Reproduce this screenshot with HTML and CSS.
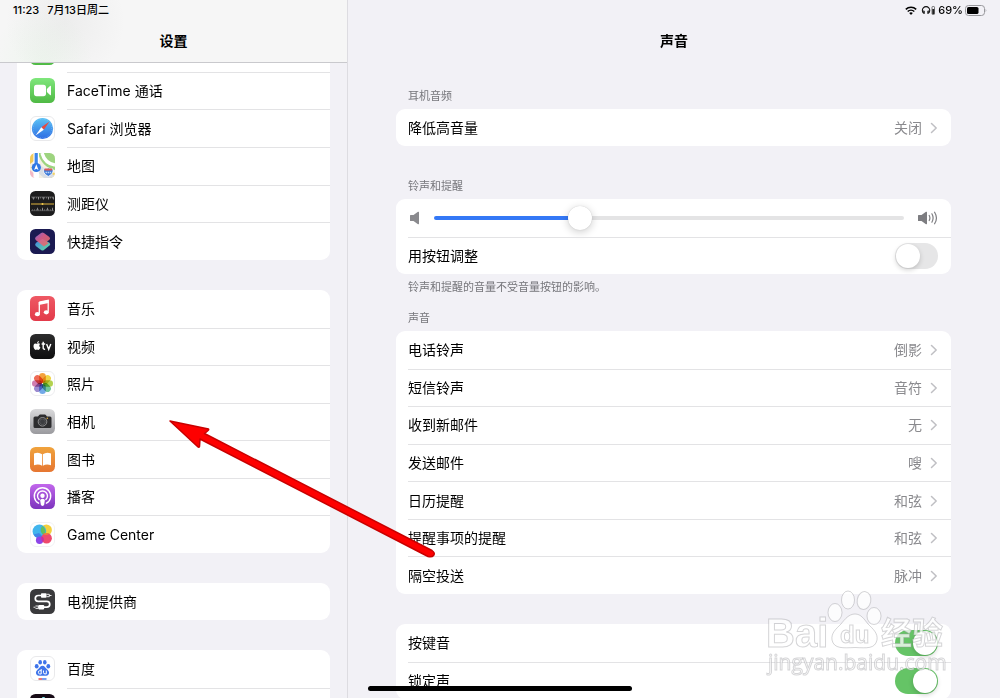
FILE: index.html
```html
<!DOCTYPE html>
<html lang="zh-CN">
<head>
  <meta charset="UTF-8">
  <meta name="viewport" content="width=device-width, initial-scale=1">
  <title>设置</title>
  <link rel="stylesheet" href="styles.css">
</head>
<body>

  <!-- shared shapes -->
  <svg class="defs" aria-hidden="true">
    <defs>
      <linearGradient id="gGreen" x1="0" y1="0" x2="0" y2="1"><stop offset="0" stop-color="#7fe77c"/><stop offset="1" stop-color="#4fb944"/></linearGradient>
      <linearGradient id="gBlue" x1="0" y1="0" x2="0" y2="1"><stop offset="0" stop-color="#5ac3f5"/><stop offset="1" stop-color="#2d6be3"/></linearGradient>
      <linearGradient id="gRed" x1="0" y1="0" x2="0" y2="1"><stop offset="0" stop-color="#ef5964"/><stop offset="1" stop-color="#e23a4a"/></linearGradient>
      <linearGradient id="gGray" x1="0" y1="0" x2="0" y2="1"><stop offset="0" stop-color="#d9d9db"/><stop offset="1" stop-color="#9a9a9e"/></linearGradient>
      <linearGradient id="gOrange" x1="0" y1="0" x2="0" y2="1"><stop offset="0" stop-color="#f0a33c"/><stop offset="1" stop-color="#e67632"/></linearGradient>
      <linearGradient id="gPurple" x1="0" y1="0" x2="0" y2="1"><stop offset="0" stop-color="#c267ec"/><stop offset="1" stop-color="#7c33bd"/></linearGradient>
      <linearGradient id="gDark" x1="0" y1="0" x2="0" y2="1"><stop offset="0" stop-color="#2c2c2d"/><stop offset="1" stop-color="#0e0e0f"/></linearGradient>
      <linearGradient id="gTop" x1="0" y1="0" x2="1" y2="1"><stop offset="0" stop-color="#8a6be0"/><stop offset=".4" stop-color="#e0608a"/><stop offset="1" stop-color="#e4705c"/></linearGradient>
      <linearGradient id="gBottom" x1="0" y1="0" x2="1" y2="1"><stop offset="0" stop-color="#3c7fe8"/><stop offset="1" stop-color="#6adf9b"/></linearGradient>
      <clipPath id="tile"><rect width="25" height="25" rx="5.5"/></clipPath>
      <symbol id="chevron" viewBox="0 0 8 12"><path d="M1.5 1.5 6.2 6 1.5 10.5" fill="none" stroke="#bfbfc3" stroke-width="1.5" stroke-linecap="round" stroke-linejoin="round"/></symbol>
    </defs>
  </svg>

  <div class="app">
    <nav class="sidebar" aria-label="设置">
      <header class="sidebar-header">
        <div class="status">
          <span>11:23</span>
          <span>7月13日周二</span>
        </div>
        <h1 class="title">设置</h1>
      </header>

      <div class="sidebar-list">
        <div class="card rows-6">
          <a class="app-row" href="#">
            <svg class="app-icon" viewBox="0 0 25 25"><rect width="25" height="25" rx="5.5" fill="url(#gGreen)"/></svg>
            <span class="app-name"></span>
          </a>
          <a class="app-row" href="#">
            <svg class="app-icon" viewBox="0 0 25 25">
              <rect width="25" height="25" rx="5.5" fill="url(#gGreen)"/>
              <rect x="4" y="6.7" width="12" height="11.5" rx="2.6" fill="#fff"/>
              <path d="M16.9 11 20 7.9Q21 7.2 21 8.4V16.5Q21 17.7 20 17L16.9 14Z" fill="#fff"/>
            </svg>
            <span class="app-name">FaceTime 通话</span>
          </a>
          <a class="app-row" href="#">
            <svg class="app-icon" viewBox="0 0 25 25">
              <rect x=".5" y=".5" width="24" height="24" rx="5.5" fill="#fff" stroke="#e9e9eb"/>
              <circle cx="12.5" cy="12.5" r="10.6" fill="url(#gBlue)"/>
              <circle cx="12.5" cy="12.5" r="9.3" fill="none" stroke="#9fd0f7" stroke-width=".6" stroke-dasharray=".5 1.3"/>
              <path d="M19.5 5.5 13.8 13.7 11.3 11.2Z" fill="#e8493f"/>
              <path d="M5.5 19.5 11.3 11.2 13.8 13.7Z" fill="#fff"/>
            </svg>
            <span class="app-name">Safari 浏览器</span>
          </a>
          <a class="app-row" href="#">
            <svg class="app-icon" viewBox="0 0 25 25">
              <g clip-path="url(#tile)">
                <rect width="25" height="25" fill="#f4f0e4"/>
                <path d="M8 0H25V17C17 16 10 9 8 0Z" fill="#9dd47f"/>
                <path d="M12 0C14 7 18 11 25 12" fill="none" stroke="#fff" stroke-width="3.5"/>
                <path d="M0 0H4V8L0 11Z" fill="#f1ca5a"/>
                <path d="M0 17V25H9Z" fill="#f3b9c5"/>
                <path d="M0 14 16 25H25V20Z" fill="#f3d262"/>
                <path d="M10 12 25 23V25H14L6 18Z" fill="#d9dee5"/>
                <path d="M6.2 0V25" stroke="#fff" stroke-width="5.5"/>
                <path d="M6.2 0V12" stroke="#3b84ea" stroke-width="3.2"/>
                <circle cx="6.3" cy="14.5" r="4.6" fill="#2f77e4"/>
                <path d="m6.3 11.3 2.2 5.6-2.2-1.1-2.2 1.1Z" fill="#fff"/>
                <path d="M14 15.6q2 .7 4.3-.6 2.3 1.3 4.3.6 2 4.9-4.3 7.8-6.3-2.9-4.3-7.8Z" fill="#3c79d8" stroke="#fff" stroke-width=".8"/>
                <path d="M14.5 16.5h7.7" stroke="#de5a55" stroke-width="1.8"/>
                <path d="M15.5 19.5h5.8" stroke="#bcd3f4" stroke-width="1.6" stroke-dasharray="1.5 .6"/>
              </g>
            </svg>
            <span class="app-name">地图</span>
          </a>
          <a class="app-row" href="#">
            <svg class="app-icon" viewBox="0 0 25 25">
              <rect width="25" height="25" rx="5.5" fill="#1c1c1d"/>
              <path d="M1 6H24M1 19.7H24" stroke="#777" stroke-width=".6"/>
              <path d="M2 6.8H24M2 18.9H24" stroke="#8c8c8c" stroke-width="1.4" stroke-dasharray=".6 1.4"/>
              <path d="M3 7.4H24M7 18H24" stroke="#ccc" stroke-width="2.4" stroke-dasharray=".6 4.4"/>
              <path d="M1 13H24" stroke="#e0b53e" stroke-width="1"/>
              <circle cx="12.5" cy="13" r="1" fill="#f5cc4e"/>
            </svg>
            <span class="app-name">测距仪</span>
          </a>
          <a class="app-row" href="#">
            <svg class="app-icon" viewBox="0 0 25 25">
              <rect width="25" height="25" rx="5.5" fill="#1b1a52"/>
              <path d="M6 13.8 12.5 10 19.5 13.8Q21 15.2 19.5 16.6L13.9 20.9Q12.5 21.9 11.1 20.9L5.7 16.9Q4.4 15.6 6 13.8Z" fill="url(#gBottom)"/>
              <path d="M5.7 8 11.1 4Q12.5 3.1 13.9 4L19.4 8Q20.7 9.4 19.4 10.8L16.7 12.7 18.6 14.3 13.9 17.4 5.7 11Q4.4 9.4 5.7 8Z" fill="url(#gTop)" opacity=".9"/>
            </svg>
            <span class="app-name">快捷指令</span>
          </a>
        </div>

        <div class="card rows-7">
          <a class="app-row" href="#">
            <svg class="app-icon" viewBox="0 0 25 25">
              <rect width="25" height="25" rx="5.5" fill="url(#gRed)"/>
              <path d="M9.3 6.1 18.2 4.2V15.8M9.3 6V17.8" fill="none" stroke="#fff" stroke-width="1.3"/>
              <path d="M8.8 6 18.7 3.9V6.9L8.8 9Z" fill="#fff"/>
              <ellipse cx="7.4" cy="18.2" rx="2.5" ry="2.1" fill="#fff"/>
              <ellipse cx="16.3" cy="16.3" rx="2.5" ry="2.1" fill="#fff"/>
            </svg>
            <span class="app-name">音乐</span>
          </a>
          <a class="app-row" href="#">
            <svg class="app-icon" viewBox="0 0 25 25">
              <rect width="25" height="25" rx="5.5" fill="url(#gDark)"/>
              <path d="M7.2 9.7c.9-.7 2.2-.5 2.9.4-1.2.9-1.1 2.7.3 3.3-.5 1.4-1.3 2.5-2.2 2.5-.5 0-.7-.3-1.2-.3s-.8.3-1.3.3c-2.3-.5-3.3-6.300-.3-6.500.8 0 1.200.4 1.800.3ZM7.100 9.200c0-1.100.8-2.100 1.800-2.200.1 1.200-.7 2.200-1.800 2.200Z" fill="#fff"/>
              <path d="M13.2 7.800V14q0 1.400 1.900 1.200M11.600 10h3.600M16.600 10l2.100 5.300L20.800 10" fill="none" stroke="#fff" stroke-width="1.400"/>
            </svg>
            <span class="app-name">视频</span>
          </a>
          <a class="app-row" href="#">
            <svg class="app-icon" viewBox="0 0 25 25">
              <rect x=".5" y=".5" width="24" height="24" rx="5.5" fill="#fff" stroke="#ececee"/>
              <g class="petals">
                <rect x="9.2" y="2" width="6.6" height="10" rx="3.3" fill="#f4a23c"/>
                <rect x="9.2" y="2" width="6.6" height="10" rx="3.3" fill="#efd446" transform="rotate(45 12.5 12.5)"/>
                <rect x="9.2" y="2" width="6.6" height="10" rx="3.3" fill="#b3d24f" transform="rotate(90 12.5 12.5)"/>
                <rect x="9.2" y="2" width="6.6" height="10" rx="3.3" fill="#72c59a" transform="rotate(135 12.5 12.5)"/>
                <rect x="9.2" y="2" width="6.6" height="10" rx="3.3" fill="#72a9e8" transform="rotate(180 12.5 12.5)"/>
                <rect x="9.2" y="2" width="6.6" height="10" rx="3.3" fill="#9c8bd0" transform="rotate(225 12.5 12.5)"/>
                <rect x="9.2" y="2" width="6.6" height="10" rx="3.3" fill="#d07db0" transform="rotate(270 12.5 12.5)"/>
                <rect x="9.2" y="2" width="6.6" height="10" rx="3.3" fill="#ee6c57" transform="rotate(315 12.5 12.5)"/>
              </g>
            </svg>
            <span class="app-name">照片</span>
          </a>
          <a class="app-row" href="#">
            <svg class="app-icon" viewBox="0 0 25 25">
              <rect width="25" height="25" rx="5.5" fill="url(#gGray)"/>
              <path d="M5 7.5H8L9.2 5.9Q9.5 5.5 10 5.5H15Q15.5 5.5 15.8 5.9L17 7.5H20Q21.5 7.5 21.5 9V17.5Q21.5 19 20 19H5Q3.5 19 3.5 17.5V9Q3.5 7.5 5 7.5Z" fill="#2d2d2f"/>
              <circle cx="12.5" cy="12.8" r="4.3" fill="none" stroke="#a8a8aa" stroke-width=".8"/>
              <circle cx="12.5" cy="12.8" r="2.9" fill="#3c3d40" stroke="#67686b" stroke-width=".6"/>
              <circle cx="17.3" cy="9.3" r=".8" fill="#e8b33c"/>
            </svg>
            <span class="app-name">相机</span>
          </a>
          <a class="app-row" href="#">
            <svg class="app-icon" viewBox="0 0 25 25">
              <rect width="25" height="25" rx="5.5" fill="url(#gOrange)"/>
              <path d="M12.1 7.3Q8.5 4.500 4 6.600V18.300Q8.500 16.300 12.100 18.800ZM12.900 7.300Q16.500 4.500 21 6.600V18.300Q16.500 16.300 12.900 18.800Z" fill="#fff"/>
            </svg>
            <span class="app-name">图书</span>
          </a>
          <a class="app-row" href="#">
            <svg class="app-icon" viewBox="0 0 25 25">
              <rect width="25" height="25" rx="5.5" fill="url(#gPurple)"/>
              <path d="M8.6 19.2A8.2 8.2 0 1 1 16.4 19.2" fill="none" stroke="#fff" stroke-width="1.4" stroke-linecap="round"/>
              <path d="M9.1 15.6A5 5 0 1 1 15.9 15.6" fill="none" stroke="#fff" stroke-width="1.4" stroke-linecap="round"/>
              <circle cx="12.5" cy="11.7" r="2.2" fill="#fff"/>
              <path d="M10.2 16.5Q10.2 14.8 12.5 14.8T14.8 16.5L14.2 20.5Q13.9 21.9 12.5 21.9T10.8 20.5Z" fill="#fff"/>
            </svg>
            <span class="app-name">播客</span>
          </a>
          <a class="app-row" href="#">
            <svg class="app-icon" viewBox="0 0 25 25">
              <rect x=".5" y=".5" width="24" height="24" rx="5.5" fill="#fff" stroke="#f1f1f3"/>
              <circle cx="16.3" cy="8" r="5.6" fill="#f3cf3d"/>
              <circle cx="9.4" cy="9.4" r="6.8" fill="#41b5ed"/>
              <path d="M12.4 4A5.600 5.600 0 0 0 14.500 13.300 6.800 6.800 0 0 0 12.400 4Z" fill="#62bf5e"/>
              <path d="M3.500 12.500A6.800 6.800 0 0 0 13 15L9 11Z" fill="#3f86e6"/>
              <circle cx="9.600" cy="18.300" r="3.700" fill="#8d45e8"/>
              <circle cx="16.600" cy="16.200" r="5.300" fill="#ee4a6e"/>
              <path d="M11.700 14.300A5.300 5.300 0 0 0 13 20.100 3.700 3.700 0 0 0 11.700 14.300Z" fill="#c22fa8"/>
              <path d="M13.300 12.200A5.300 5.300 0 0 1 19.300 11.700 5.600 5.600 0 0 1 13.300 12.200Z" fill="#f08336"/>
            </svg>
            <span class="app-name">Game Center</span>
          </a>
        </div>

        <div class="card">
          <a class="app-row" href="#">
            <svg class="app-icon" viewBox="0 0 25 25">
              <rect width="25" height="25" rx="5.5" fill="#3a3a3c"/>
              <path d="M11 6.500H8.200a2.900 2.900 0 0 0 0 5.800H16.800a2.900 2.900 0 0 1 0 5.900H14" fill="none" stroke="#fff" stroke-width="1.700"/>
              <rect x="11" y="4.300" width="5.500" height="4.400" rx=".8" fill="#fff"/>
              <path d="M16.500 5.300h2.800v2.400h-2.800M19.300 6.500H21.500M5.500 17h2.800v2.400H5.500M5.500 18.200H3.500" fill="none" stroke="#fff" stroke-width=".9"/>
              <rect x="8.300" y="16" width="5.900" height="4.400" rx=".8" fill="#fff"/>
            </svg>
            <span class="app-name">电视提供商</span>
          </a>
        </div>

        <div class="card rows-2">
          <a class="app-row" href="#">
            <svg class="app-icon" viewBox="0 0 25 25">
              <rect x=".5" y=".5" width="24" height="24" rx="5.5" fill="#fff" stroke="#e9e9eb"/>
              <g fill="#3f74ea">
                <ellipse cx="6.700" cy="10.200" rx="1.900" ry="2.300"/>
                <ellipse cx="10.200" cy="6.200" rx="1.800" ry="2.300"/>
                <ellipse cx="14.800" cy="6.200" rx="1.800" ry="2.300"/>
                <ellipse cx="18.300" cy="10.200" rx="1.900" ry="2.300"/>
                <path d="M12.500 9.800c2 0 2.600 1.700 4 3 2 1.700 3 3 2.400 4.900-.9 2.600-3.700 2-6.400 2s-5.500.6-6.400-2c-.6-1.900.4-3.200 2.400-4.900 1.400-1.300 2-3 4-3Z"/>
              </g>
              <path d="M11.200 13v5H9.700q-1.300-.1-1.300-1.700t1.300-1.600h1.500M13.500 14.500v2.200q0 1.200 1.500 1.200h1.300v-3.400" fill="none" stroke="#fff" stroke-width="1"/>
              <path d="M8.500 23H12" stroke="#df3b3b" stroke-width="1.400"/>
              <path d="M12 23H16.500" stroke="#3f74ea" stroke-width="1.400"/>
            </svg>
            <span class="app-name">百度</span>
          </a>
          <a class="app-row" href="#">
            <svg class="app-icon" viewBox="0 0 25 25"><rect width="25" height="25" rx="5.5" fill="#170b16"/><path d="M13.500 3V17" stroke="#7fe3e6" stroke-width="2.500"/></svg>
            <span class="app-name"></span>
          </a>
        </div>
      </div>
    </nav>

    <main class="detail">
      <header class="detail-header">
        <div class="status status-right">
          <svg class="wifi" viewBox="0 0 12 9">
            <path d="M.8 3.400A7.500 7.500 0 0 1 11.200 3.400" fill="none" stroke="#000" stroke-width="1.500"/>
            <path d="M2.700 5.500A4.800 4.800 0 0 1 9.300 5.500" fill="none" stroke="#000" stroke-width="1.500"/>
            <path d="M4.200 7.100Q6 5.600 7.800 7.100L6 9Z"/>
          </svg>
          <svg class="headset" viewBox="0 0 14 10">
            <path d="M2.300 8.300A3.700 3.700 0 1 1 6.800 8.300" fill="none" stroke="#111" stroke-width="1.100"/>
            <path d="M1.800 5.300 3.300 6V9L1.600 8.300ZM7.300 5.300 5.800 6V9L7.500 8.300Z" fill="#222"/>
            <rect x="10.500" y="1.500" width="2.500" height="8" rx=".7" fill="none" stroke="#555" stroke-width=".8"/>
            <rect x="10.800" y="4" width="2" height="5" fill="#222"/>
          </svg>
          <span>69%</span>
          <svg class="battery" viewBox="0 0 22 11">
            <rect x=".5" y=".5" width="19" height="10" rx="3" fill="none" stroke="#98989c"/>
            <rect x="2" y="2" width="11.500" height="7" rx="1.600"/>
            <path d="M20.700 3.800Q22 5.500 20.700 7.200Z" fill="#98989c"/>
          </svg>
        </div>
        <h2 class="title">声音</h2>
      </header>

      <div class="groups">
        <section class="group">
          <h3 class="caption">耳机音频</h3>
          <div class="card">
            <a class="row" href="#">降低高音量<span class="value">关闭</span><svg class="chevron"><use href="#chevron"/></svg></a>
          </div>
        </section>

        <section class="group">
          <h3 class="caption">铃声和提醒</h3>
          <div class="card rows-2">
            <div class="row volume">
              <svg class="speaker" viewBox="0 0 10 14"><path d="M0 4.600Q0 4 .6 4H3.500L8 .8Q9 .3 9 1.400V12.600Q9 13.700 8 13.200L3.500 10H.6Q0 10 0 9.400Z" fill="#8a8a8e"/></svg>
              <input class="slider" type="range" min="0" max="100" value="30" aria-label="铃声和提醒">
              <svg class="speaker-loud" viewBox="0 0 20 14">
                <path d="M0 4.600Q0 4 .6 4H3.500L8 .8Q9 .3 9 1.400V12.600Q9 13.700 8 13.200L3.500 10H.6Q0 10 0 9.400Z" fill="#7d7d81"/>
                <path d="M11.200 4.500Q12.600 7 11.200 9.500M13.900 2.800Q16.300 7 13.900 11.200M16.600 1.200Q20.300 7 16.600 12.800" fill="none" stroke="#7d7d81" stroke-width="1.200" stroke-linecap="round"/>
              </svg>
            </div>
            <label class="row">用按钮调整<input class="switch" type="checkbox"></label>
          </div>
          <p class="note">铃声和提醒的音量不受音量按钮的影响。</p>
        </section>

        <section class="group">
          <h3 class="caption">声音</h3>
          <div class="card rows-7">
            <a class="row" href="#">电话铃声<span class="value">倒影</span><svg class="chevron"><use href="#chevron"/></svg></a>
            <a class="row" href="#">短信铃声<span class="value">音符</span><svg class="chevron"><use href="#chevron"/></svg></a>
            <a class="row" href="#">收到新邮件<span class="value">无</span><svg class="chevron"><use href="#chevron"/></svg></a>
            <a class="row" href="#">发送邮件<span class="value">嗖</span><svg class="chevron"><use href="#chevron"/></svg></a>
            <a class="row" href="#">日历提醒<span class="value">和弦</span><svg class="chevron"><use href="#chevron"/></svg></a>
            <a class="row" href="#">提醒事项的提醒<span class="value">和弦</span><svg class="chevron"><use href="#chevron"/></svg></a>
            <a class="row" href="#">隔空投送<span class="value">脉冲</span><svg class="chevron"><use href="#chevron"/></svg></a>
          </div>
        </section>

        <section class="group">
          <div class="card rows-2">
            <label class="row">按键音<input class="switch" type="checkbox" checked></label>
            <label class="row">锁定声<input class="switch" type="checkbox" checked></label>
          </div>
        </section>
      </div>
    </main>
  </div>

  <svg class="arrow" viewBox="0 0 280 150" aria-hidden="true">
    <path d="M10 9 48.500 17Q49.500 18 44.500 21.500L272 138.500Q275.500 141 273.500 143.500 272 145.500 268 144.500L40 27 39.500 34.500Q39 36 37.500 34.500Z" fill="#fe0000" stroke="#c80000" stroke-width="1.500" stroke-linejoin="round"/>
  </svg>

  <svg class="watermark" viewBox="0 0 182 88" aria-hidden="true">
    <g class="mark">
      <text class="mark-latin" x="0" y="57">Bai</text>
      <ellipse cx="69" cy="22.500" rx="7" ry="9"/>
      <ellipse cx="82" cy="10" rx="6.500" ry="9"/>
      <ellipse cx="98" cy="10.500" rx="6.800" ry="9" transform="rotate(10 98 10.500)"/>
      <ellipse cx="108" cy="26" rx="7" ry="8.500"/>
      <path d="M89 24c6 0 9 5 13 10 5 5 10 9 9 16-2 9-10 8-22 7.500C77 58 68 59 66 50c-1-7 4-11 9-16 4-5 8-10 14-10Z"/>
      <text class="mark-du" x="74" y="53">du</text>
      <text class="mark-cjk" x="115" y="54">经验</text>
      <text class="mark-url" x="2" y="80">jingyan.baidu.com</text>
    </g>
  </svg>

  <div class="home-indicator"></div>

</body>
</html>
```
FILE: styles.css
```css
:root {
  --bg: #f2f1f6;
  --line: #e3e3e5;
  --gray: #8a8a8e;
  --blue: #3478f6;
  --green: #65c466;
}

* {
  box-sizing: border-box;
}

body {
  margin: 0;
  position: relative;
  height: 100vh;
  overflow: hidden;
  background: var(--bg);
  color: #000;
  font-family: Inter, "Noto Sans CJK SC", sans-serif;
  font-size: 14px;
  line-height: 20px;
}

a {
  color: inherit;
  text-decoration: none;
}

.defs {
  position: absolute;
  width: 0;
  height: 0;
}

.app {
  display: grid;
  grid-template-columns: 348px 1fr;
  height: 100%;
}

.sidebar,
.detail {
  display: flex;
  flex-direction: column;
  min-height: 0;
  overflow: hidden;
}

.sidebar {
  border-right: 1px solid #dddce1;
}

.sidebar-header,
.detail-header {
  flex: none;
}

.sidebar-header {
  position: relative;
  z-index: 1;
  border-bottom: 1px solid #c9c9cd;
  background:
    radial-gradient(circle at 65px 22px, rgba(130, 130, 130, 0.08), transparent 60px),
    radial-gradient(circle at 42px 60px, rgba(150, 240, 150, 0.08), transparent 50px),
    #f6f6f6;
}

.status {
  display: flex;
  align-items: center;
  gap: 8px;
  height: 20px;
  padding: 0 13px;
  font-size: 11px;
  font-weight: 500;
}

.status-right {
  justify-content: flex-end;
  gap: 2px;
}

.wifi {
  width: 12px;
  height: 9px;
}

.headset {
  width: 15px;
  height: 10px;
  margin-left: 2px;
}

.battery {
  width: 22px;
  height: 11px;
}

.title {
  margin: 0;
  font-size: 14px;
  font-weight: 600;
  line-height: 42px;
  text-align: center;
}

/* cards */
.card {
  display: grid;
  grid-auto-rows: 1fr;
  min-height: 37px;
  border-radius: 9px;
  background: #fff;
}

.rows-2 {
  min-height: 75px;
}

.rows-6 {
  min-height: 226px;
}

.rows-7 {
  min-height: 263px;
}

/* sidebar rows */
.sidebar-list {
  display: flex;
  flex-direction: column;
  gap: 30px;
  margin-top: -29px;
  padding: 0 17px;
}

.app-row {
  display: flex;
  align-items: center;
  gap: 12px;
  padding-left: 13px;
}

.app-icon {
  flex: none;
  width: 25px;
  height: 25px;
}

.petals rect {
  mix-blend-mode: multiply;
}

.app-name {
  display: flex;
  flex: 1;
  align-items: center;
  align-self: stretch;
}

.app-row + .app-row .app-name {
  border-top: 1px solid var(--line);
}

/* detail pane */
.groups {
  padding: 26px 49px 0 48px;
}

.group {
  margin-bottom: 32px;
}

.group:has(.note) {
  margin-bottom: 15px;
}

.group:has(.rows-7) {
  margin-bottom: 30px;
}

.caption,
.note {
  margin: 0 12px 5px;
  color: #76767b;
  font-size: 11px;
  font-weight: 400;
  line-height: 16px;
}

.note {
  margin: 5px 12px 0;
}

.row {
  display: flex;
  align-items: center;
  margin-left: 12px;
  padding-right: 13px;
}

.row + .row {
  border-top: 1px solid var(--line);
}

.value {
  margin-left: auto;
  color: var(--gray);
}

.chevron {
  width: 8px;
  height: 12px;
  margin-left: 8px;
}

.volume {
  padding-left: 2px;
}

.speaker {
  flex: none;
  width: 10px;
  height: 14px;
}

.speaker-loud {
  flex: none;
  width: 20px;
  height: 14px;
}

.slider {
  flex: 1;
  min-width: 0;
  height: 24px;
  margin: 0 14px;
  appearance: none;
  background: transparent;
}

.slider::-webkit-slider-runnable-track {
  height: 4px;
  border-radius: 2px;
  background: linear-gradient(to right, var(--blue) 31%, #e4e4e5 31%);
}

.slider::-webkit-slider-thumb {
  width: 24px;
  height: 24px;
  margin-top: -10px;
  appearance: none;
  border-radius: 50%;
  background: #fff;
  box-shadow: 0 2px 8px rgba(0, 0, 0, 0.2), 0 0 1px rgba(0, 0, 0, 0.2);
}

.switch {
  display: flex;
  align-items: center;
  width: 43px;
  height: 26px;
  margin: 0 0 0 auto;
  padding: 0 1px;
  appearance: none;
  border-radius: 13px;
  background: #e6e6e7;
}

.switch::before {
  content: "";
  width: 24px;
  height: 24px;
  border-radius: 50%;
  background: #fff;
  box-shadow: 0 2px 5px rgba(0, 0, 0, 0.18);
}

.switch:checked {
  justify-content: flex-end;
  background: var(--green);
}

/* overlays */
.arrow {
  position: absolute;
  top: 412px;
  left: 160px;
  width: 280px;
  height: 150px;
  pointer-events: none;
}

.watermark {
  position: absolute;
  right: 52px;
  bottom: 20px;
  width: 182px;
  height: 88px;
  overflow: visible;
  pointer-events: none;
}

.mark {
  fill: rgba(255, 255, 255, 0.75);
  stroke: rgba(150, 150, 155, 0.4);
  stroke-width: 1px;
}

.mark-latin {
  font: bold 40px "Liberation Sans", sans-serif;
}

.mark-du {
  font: bold 24px "Liberation Sans", sans-serif;
}

.mark-cjk {
  font: bold 31px "Noto Sans CJK SC", sans-serif;
}

.mark-url {
  font: 21px "Open Sans", sans-serif;
}

.home-indicator {
  position: absolute;
  bottom: 7px;
  left: 50%;
  width: 264px;
  height: 5px;
  border-radius: 3px;
  background: #000;
  transform: translateX(-50%);
}
```
